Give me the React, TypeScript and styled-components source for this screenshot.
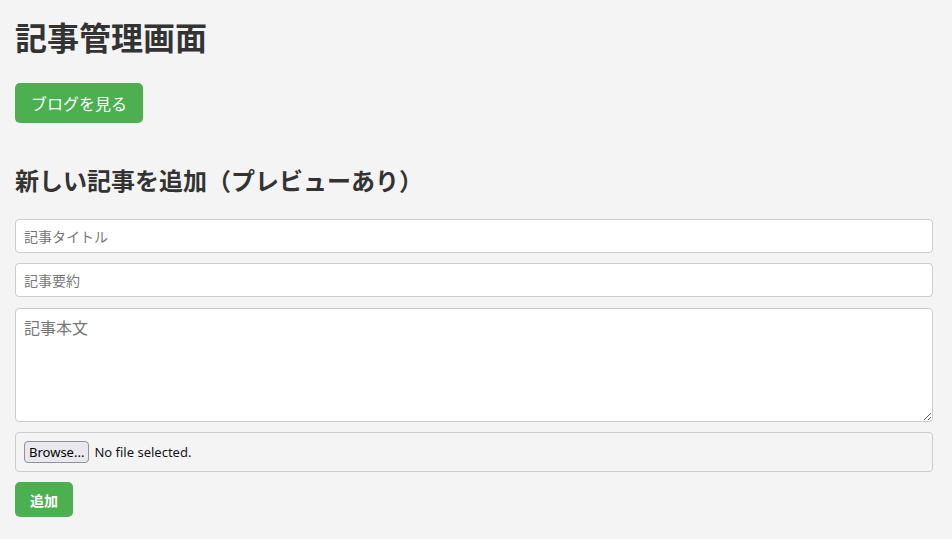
import React, { useState } from 'react';
import styled, { createGlobalStyle } from 'styled-components';

const GlobalStyle = createGlobalStyle`
  html, body {
    margin: 0;
    padding: 0;
    background: #f4f4f4;
  }
  body {
    font-family: "Noto Sans CJK JP", "Noto Sans", "Liberation Sans", sans-serif;
    color: #333;
  }
`;

const Page = styled.div`
  padding: 16px 19px 20px 15px;
`;

const Title = styled.h1`
  margin: 0;
  font-size: 32px;
  line-height: 40px;
  font-weight: 700;
  color: #333;
`;

const GreenButton = styled.button<{ $small?: boolean }>`
  display: inline-flex;
  align-items: center;
  justify-content: center;
  height: ${p => (p.$small ? '35px' : '40px')};
  padding: 0 ${p => (p.$small ? '15px' : '16px')};
  background: #4caf50;
  color: #fff;
  border: none;
  border-radius: 5px;
  font-family: inherit;
  font-size: ${p => (p.$small ? '14px' : '16px')};
  font-weight: ${p => (p.$small ? 700 : 400)};
  cursor: pointer;
`;

const TopButton = styled(GreenButton)`
  margin-top: 27px;
`;

const SubTitle = styled.h2`
  margin: 41px 0 23px;
  font-size: 24px;
  line-height: 32px;
  font-weight: 700;
  color: #333;
`;

const Form = styled.form`
  display: flex;
  flex-direction: column;
  align-items: flex-start;
  gap: 10px;
`;

const TextInput = styled.input`
  box-sizing: border-box;
  width: 100%;
  height: 34px;
  padding: 0 8px;
  border: 1px solid #ccc;
  border-radius: 4px;
  background: #fff;
  font-family: inherit;
  font-size: 14px;
  color: #333;
  &::placeholder { color: #777; }
`;

const TextArea = styled.textarea`
  box-sizing: border-box;
  width: 100%;
  height: 114px;
  margin-top: 1px;
  padding: 6px 8px;
  border: 1px solid #ccc;
  border-radius: 4px;
  background: #fff;
  font-family: inherit;
  font-size: 16px;
  color: #333;
  resize: vertical;
  &::placeholder { color: #777; }
`;

const FileBox = styled.label`
  box-sizing: border-box;
  width: 100%;
  height: 40px;
  display: flex;
  align-items: center;
  gap: 5px;
  padding: 0 8px;
  border: 1px solid #ccc;
  border-radius: 4px;
  background: #f4f4f4;
  font-family: "Noto Sans", "Liberation Sans", sans-serif;
  font-size: 13px;
  color: #15141a;
  cursor: pointer;
  input { display: none; }
`;

const BrowseButton = styled.span`
  display: inline-flex;
  align-items: center;
  height: 22px;
  padding: 0 4px;
  box-sizing: border-box;
  border: 1px solid #8f8f9d;
  border-radius: 4px;
  background: #e9e9ed;
  color: #000;
`;

export default function App() {
  const [fileName, setFileName] = useState('');
  return (
    <Page>
      <GlobalStyle />
      <Title>記事管理画面</Title>
      <TopButton type="button">ブログを見る</TopButton>
      <SubTitle>新しい記事を追加（プレビューあり）</SubTitle>
      <Form onSubmit={e => e.preventDefault()}>
        <TextInput placeholder="記事タイトル" />
        <TextInput placeholder="記事要約" />
        <TextArea placeholder="記事本文" />
        <FileBox>
          <input type="file" onChange={e => setFileName(e.target.files?.[0]?.name ?? '')} />
          <BrowseButton>Browse...</BrowseButton>
          <span>{fileName || 'No file selected.'}</span>
        </FileBox>
        <GreenButton $small type="submit">追加</GreenButton>
      </Form>
    </Page>
  );
}
